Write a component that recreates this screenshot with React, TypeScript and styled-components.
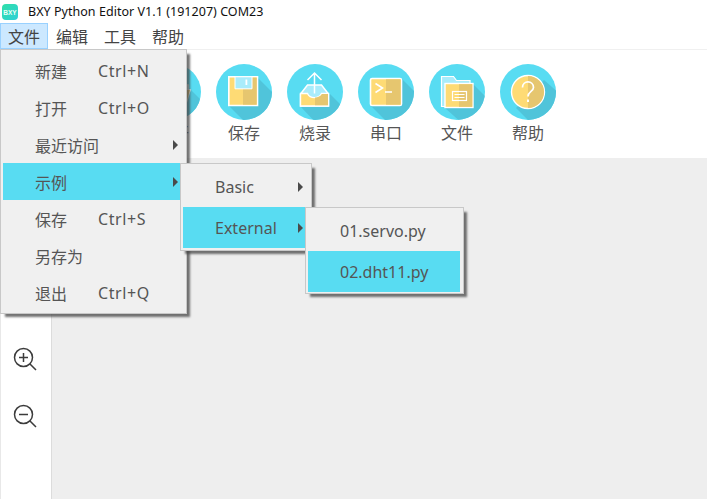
import React from "react";
import styled, { createGlobalStyle } from "styled-components";

const Global = createGlobalStyle`
  html, body { margin: 0; padding: 0; background: #fff; }
  body { font-family: "Noto Sans", "Noto Sans CJK SC", sans-serif; overflow: hidden; }
`;
const Window = styled.div`
  position: relative; width: 707px; height: 499px; display: flex; flex-direction: column; overflow: hidden; background: #fff;
`;
const TitleBar = styled.div`
  height: 23px; display: flex; align-items: center; padding-left: 2px; gap: 10px; flex: none;
`;
const TitleText = styled.span`
  font-family: "Noto Sans", sans-serif; font-size: 12.5px; color: #111; letter-spacing: 0.04px; white-space: nowrap;
`;
const MenuBar = styled.div`
  height: 26px; flex: none; display: flex; align-items: stretch; border-bottom: 1px solid #f0f0f0;
`;
const MenuTitle = styled.div<{ $open?: boolean }>`
  width: 48px; box-sizing: border-box; display: flex; align-items: center; justify-content: center;
  font-size: 16px; color: #444;
  font-family: "Noto Sans CJK SC", sans-serif;
  background: ${p => p.$open ? "#cce8ff" : "transparent"};
  border: 1px solid ${p => p.$open ? "#99d1ff" : "transparent"};
`;
const Toolbar = styled.div`
  height: 108px; flex: none; display: flex; padding-left: 145px; gap: 15px; align-items: flex-start; padding-top: 14px; box-sizing: border-box;
`;
const Tool = styled.div`
  width: 56px; flex: none; display: flex; flex-direction: column; align-items: center; gap: 1px;
`;
const ToolLabel = styled.span`
  font-family: "Noto Sans CJK SC", sans-serif; font-size: 16px; line-height: 22px; color: #555; white-space: nowrap;
`;
const Body = styled.div`
  flex: 1; display: flex; min-height: 0;
`;
const Sidebar = styled.div`
  width: 48px; flex: none; border-left: 1px solid #e8e8e8; border-right: 1px solid #dcdcdc; display: flex; flex-direction: column; align-items: center;
  padding: 189px 2px 0 0; gap: 33px;
`;
const Canvas = styled.div`
  flex: 1; background: #eeeeee;
`;
const Menu = styled.div<{ $x: number; $y: number; $w: number; $h: number }>`
  position: absolute; left: ${p => p.$x}px; top: ${p => p.$y}px; width: ${p => p.$w}px; height: ${p => p.$h}px;
  box-sizing: border-box; background: #f0f0f0; border: 1px solid #c8c8c8; padding: 2px 0 2px 2px;
  box-shadow: 4px 4px 2px -1px rgba(70,70,70,.75);
  display: flex; flex-direction: column;
`;
const Item = styled.div<{ $h: number; $active?: boolean; $pad: number }>`
  height: ${p => p.$h}px; flex: none; position: relative; display: flex; align-items: center;
  padding-left: ${p => p.$pad}px; margin-right: 3px;
  background: ${p => p.$active ? "#58dcf2" : "transparent"};
  font-size: 16px; color: #555; white-space: nowrap;
`;
const ItemName = styled.span<{ $cjk?: boolean }>`
  width: 63px; flex: none;
  font-family: ${p => p.$cjk ? '"Noto Sans CJK SC", sans-serif' : '"Noto Sans", sans-serif'};
  font-size: 16px;
`;
const Shortcut = styled.span`
  font-family: "Noto Sans", sans-serif; font-size: 16px; letter-spacing: 0.6px;
`;
const Arrow = styled.span`
  position: absolute; right: 5px; top: 50%; margin-top: -5px; width: 0; height: 0;
  border-left: 5px solid #4a4a4a; border-top: 5px solid transparent; border-bottom: 5px solid transparent;
`;

const C = "#58dcf2", S = "#50c4da", Y = "#fedb75", YD = "#e6c66f", B = "#a9ecfb";
const Disc = ({ children, id, shadow }: { children?: React.ReactNode; id: string; shadow: string }) => (
  <svg width="56" height="56" viewBox="0 0 56 56">
    <clipPath id={id}><circle cx="28" cy="28" r="28" /></clipPath>
    <circle cx="28" cy="28" r="28" fill={C} />
    <path d={shadow} fill={S} clipPath={`url(#${id})`} />
    {children}
  </svg>
);
const OpenIcon = () => (
  <Disc id="c2" shadow="M14 42 L40 20 L60 40 L60 60 L32 60 Z">
    <path d="M13 17h14l3 4h13v6H13z" fill={B} stroke="#fff" strokeWidth="1.5" />
    <path d="M13 26h32l-5 17H13z" fill={Y} stroke="#fff" strokeWidth="1.5" />
    <path d="M28 26h17l-5 17H28z" fill={YD} />
  </Disc>
);
const SaveIcon = () => (
  <Disc id="c3" shadow="M13 42 L42 14 L60 32 L60 60 L31 60 Z">
    <path d="M12.800 12.800h28.700v28.700H12.800z" fill={Y} stroke="#fff" strokeWidth="1.6" />
    <path d="M27 13.600h13.700v27.100H27z" fill={YD} />
    <path d="M19 12.800h17v12H19z" fill={B} stroke="#fff" strokeWidth="1" />
    <path d="M29.500 15.500h1.800v5.500h-1.800z" fill="#fff" />
  </Disc>
);
const BurnIcon = () => (
  <Disc id="c4" shadow="M14 43 L43 30 L60 47 L60 60 L30 60 Z">
    <path d="M13.500 30 L20.500 21 H34.500 L41.500 30 V42 H13.500z" fill={B} stroke="#fff" strokeWidth="1.5" />
    <path d="M13.500 29.500h7c2.500 5.500 11.500 5.500 14 0h7v12.500h-28z" fill={Y} stroke="#fff" strokeWidth="1.4" />
    <path d="M28 33.500c3 0 5.500-1.500 7-3.500h6v11.300H28z" fill={YD} />
    <path d="M27.500 29.500V9.500M20.500 16 27.500 9l7 7" fill="none" stroke="#fff" strokeWidth="1.500" />
  </Disc>
);
const TermIcon = () => (
  <Disc id="c5" shadow="M13 42 L44 15 L60 31 L60 60 L31 60 Z">
    <rect x="12.500" y="14.500" width="31" height="27" rx="1.500" fill={Y} stroke="#fff" strokeWidth="1.6" />
    <path d="M28 15.300h14.700v25.400H28z" fill={YD} />
    <path d="M17.500 19.500l7 4.500-7 4.500M27 28h7" fill="none" stroke="#fff" strokeWidth="1.600" />
  </Disc>
);
const FolderIcon = () => (
  <Disc id="c6" shadow="M16 44 L44 20 L60 36 L60 60 L34 60 Z">
    <path d="M12.500 12.500h12l3 4h13.500v26H12.500z" fill={B} stroke="#fff" strokeWidth="1.200" />
    <rect x="16" y="19.500" width="28" height="24" fill={Y} stroke="#fff" strokeWidth="1.400" />
    <path d="M30 20.200h13.300v22.600H30z" fill={YD} />
    <rect x="23.500" y="27.500" width="14" height="9" fill="none" stroke="#fff" strokeWidth="1.200" />
    <path d="M25.500 30.500h10M25.500 33.500h10" stroke="#fff" strokeWidth="1.200" />
  </Disc>
);
const HelpIcon = () => (
  <Disc id="c7" shadow="M16 44 L44 16 L60 30 L60 60 L32 60 Z">
    <circle cx="28" cy="28" r="16.500" fill={Y} stroke="#fff" strokeWidth="1.400" />
    <path d="M28 12a16 16 0 0 1 0 32z" fill={YD} />
    <path d="M22.500 23.500c0-7.500 11-7.500 11 0 0 4-5.500 4-5.500 9" fill="none" stroke="#fff" strokeWidth="1.700" />
    <path d="M27 35.500h2v2.500h-2z" fill="#fff" />
  </Disc>
);
const Logo = () => (
  <svg width="16" height="16" viewBox="0 0 16 16">
    <defs>
      <linearGradient id="lg" x1="0" y1="0" x2="1" y2="1">
        <stop offset="0" stopColor="#2fe0a8" /><stop offset="1" stopColor="#2fd0d8" />
      </linearGradient>
    </defs>
    <rect width="16" height="16" rx="4" fill="url(#lg)" />
    <text x="8" y="11" textAnchor="middle" fontSize="6.500" fontWeight="700" fontFamily="Liberation Sans, sans-serif" fill="#eafff8">BXY</text>
  </svg>
);
const ZoomIcon = ({ plus }: { plus?: boolean }) => (
  <svg width="24" height="24" viewBox="0 0 24 24" fill="none" stroke="#3c3c3c" strokeWidth="1.500">
    <circle cx="10.500" cy="10.500" r="9" />
    <path d="M17 17l6 6M6 10.500h9" />
    {plus && <path d="M10.500 6v9" />}
  </svg>
);

const tools: [React.ReactNode, string][] = [
  [<OpenIcon key="c" />, "打开"],
  [<SaveIcon key="d" />, "保存"], [<BurnIcon key="e" />, "烧录"], [<TermIcon key="f" />, "串口"],
  [<FolderIcon key="g" />, "文件"], [<HelpIcon key="h" />, "帮助"],
];
const fileItems: { name: string; key?: string; arrow?: boolean; active?: boolean }[] = [
  { name: "新建", key: "Ctrl+N" }, { name: "打开", key: "Ctrl+O" }, { name: "最近访问", arrow: true },
  { name: "示例", arrow: true, active: true }, { name: "保存", key: "Ctrl+S" }, { name: "另存为" }, { name: "退出", key: "Ctrl+Q" },
];

export default function App() {
  return (
    <Window>
      <Global />
      <TitleBar><Logo /><TitleText>BXY Python Editor V1.1 (191207) COM23</TitleText></TitleBar>
      <MenuBar>
        <MenuTitle $open>文件</MenuTitle><MenuTitle>编辑</MenuTitle><MenuTitle>工具</MenuTitle><MenuTitle>帮助</MenuTitle>
      </MenuBar>
      <Toolbar>
        {tools.map(([icon, label], i) => (
          <Tool key={i}>{icon}<ToolLabel>{label}</ToolLabel></Tool>
        ))}
      </Toolbar>
      <Body>
        <Sidebar><ZoomIcon plus /><ZoomIcon /></Sidebar>
        <Canvas />
      </Body>
      <Menu $x={0} $y={49} $w={187} $h={265}>
        {fileItems.map(it => (
          <Item key={it.name} $h={37} $pad={32} $active={it.active}>
            <ItemName $cjk>{it.name}</ItemName>
            {it.key && <Shortcut>{it.key}</Shortcut>}
            {it.arrow && <Arrow />}
          </Item>
        ))}
      </Menu>
      <Menu $x={180} $y={163} $w={132} $h={88}>
        <Item $h={41} $pad={32}><ItemName>Basic</ItemName><Arrow /></Item>
        <Item $h={41} $pad={32} $active><ItemName>External</ItemName><Arrow /></Item>
      </Menu>
      <Menu $x={305} $y={207} $w={159} $h={87}>
        <Item $h={41} $pad={32}><ItemName>01.servo.py</ItemName></Item>
        <Item $h={41} $pad={32} $active><ItemName>02.dht11.py</ItemName></Item>
      </Menu>
    </Window>
  );
}
